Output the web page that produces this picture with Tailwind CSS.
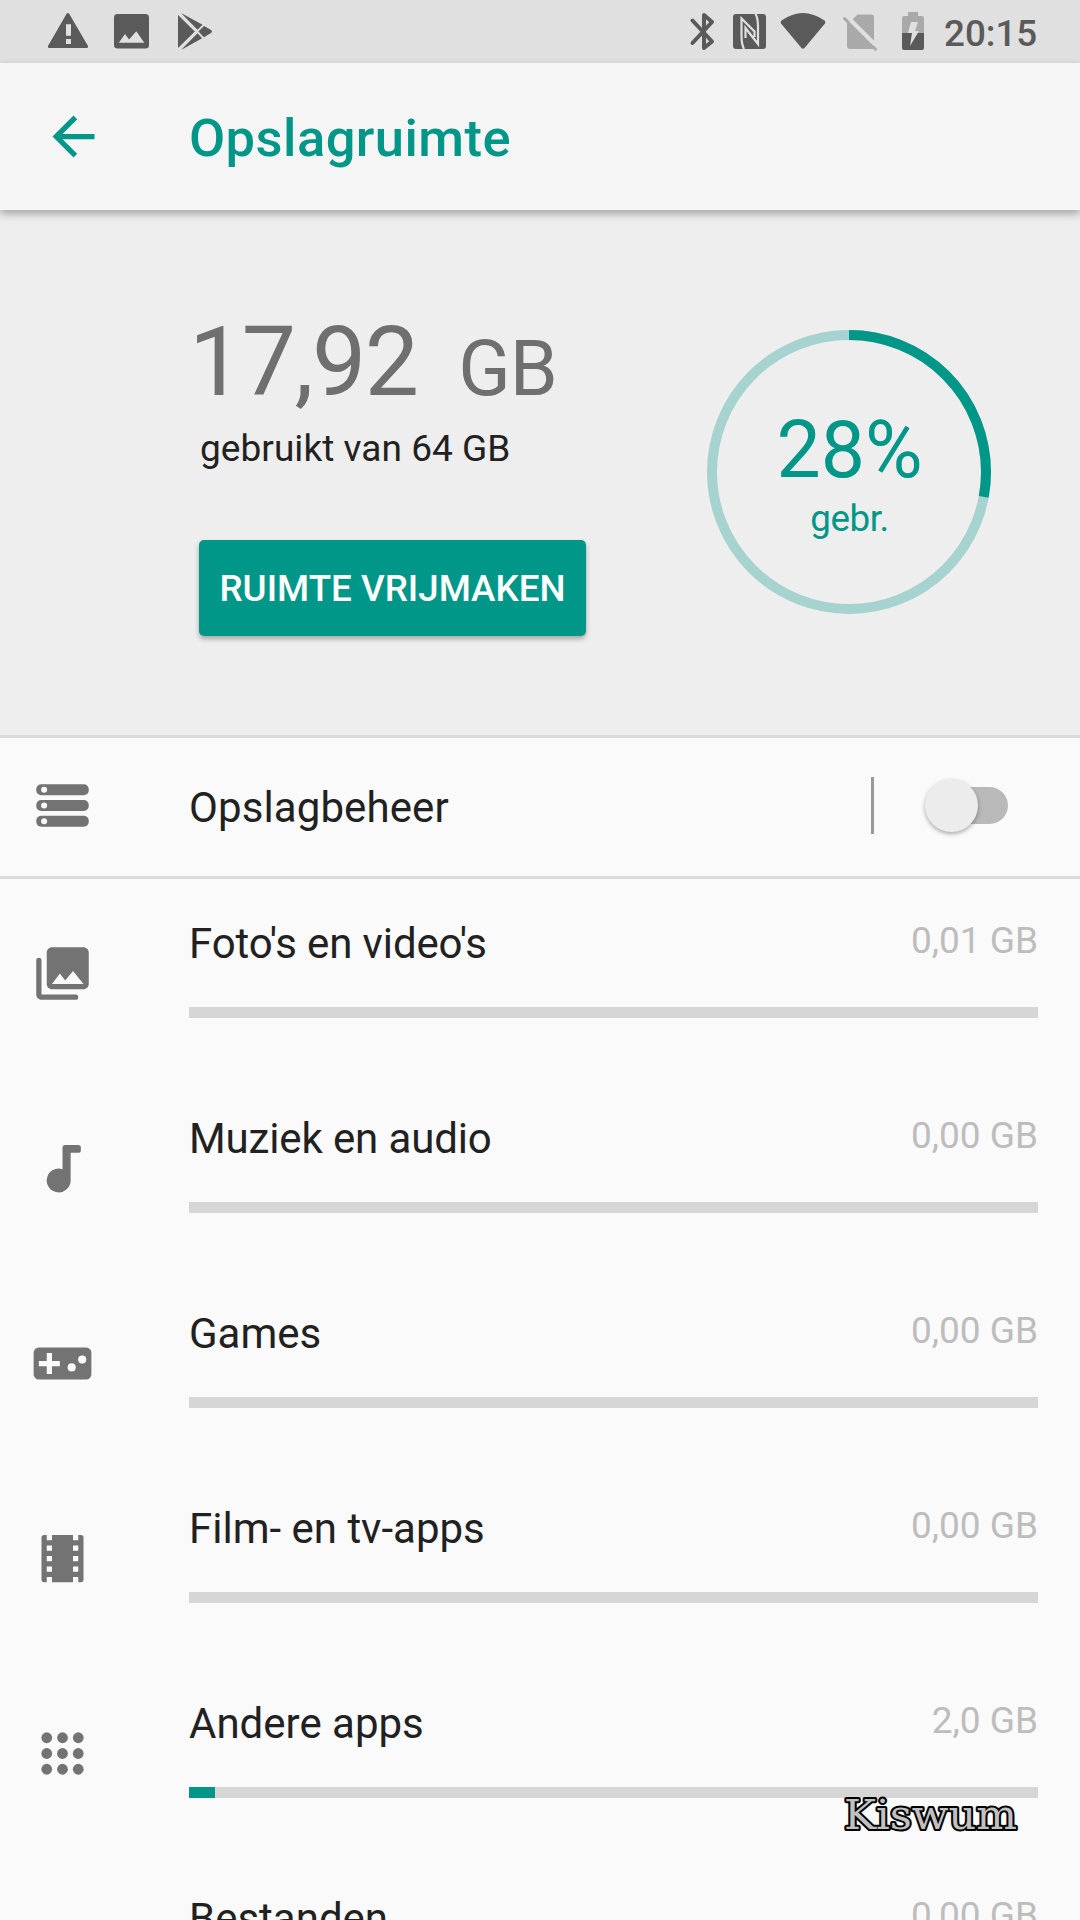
<!DOCTYPE html>
<html lang="nl">

<head>
    <meta charset="UTF-8">
    <meta name="viewport" content="width=device-width, initial-scale=1.0">
    <title>Opslagruimte</title>
    <!-- Tailwind CSS CDN -->
    <script src="https://cdn.jsdelivr.net/npm/@tailwindcss/browser@4"></script>
</head>

<body class="bg-[#fafafa] font-['Roboto',sans-serif] text-[#212121]">
    <div class="relative w-[1080px] h-[1920px] overflow-hidden flex flex-col">

        <!-- Status bar -->
        <div class="h-[63px] shrink-0 bg-[#e0e0e0] text-[#5a5a5a] flex justify-between">
            <svg class="w-[240px] h-[63px]" viewBox="0 0 240 63" fill="currentColor">
                <path fill-rule="evenodd" d="M66.6 13.8q1.4-1.6 2.6 0L88 46q.6 2-1.2 2H49.200q-1.800 0-1.200-2zM66 24.300v11.400h5V24.300zM66 39v5h5v-5z" />
                <path fill-rule="evenodd" d="M117.500 14h28q3.500 0 3.500 3.500v27.500q0 3.500-3.500 3.500h-28q-3.500 0-3.500-3.500V17.500q0-3.500 3.500-3.500zM118.800 42.800h25.500l-8-11.500-7.200 8.200-4.100-5.500z" />
                <path d="M178 15l16.800 16.500L178 48zM181 13l21.500 11.800-5 5zM204 26l7 4q2 1.500 0 3l-7 4.200-5.600-5.600zM197.500 33.300l4.600 5L181 50z" />
            </svg>
            <div class="flex">
                <svg class="w-[250px] h-[63px]" viewBox="680 0 250 63" fill="currentColor">
                    <path d="M692.500 20.500L712 41.500 704 48V15l8 7-19.500 21" fill="none" stroke="currentColor" stroke-width="4" stroke-linejoin="round" stroke-linecap="round" />
                    <rect x="733" y="14" width="33" height="35" rx="3" />
                    <path d="M744 49Q741.500 44 741.500 36V18.500L754.500 31.500V37M745.500 38V28L758 44V27Q758 18 755.500 14" fill="none" stroke="#e0e0e0" stroke-width="2.200" />
                    <path d="M781.500 20.500Q803 5.500 824.500 20.500 826 22 825 23.500L804.500 48q-1.500 1.500-3 0L781 23.500q-1-1.500.5-3z" />
                    <g stroke-linecap="round">
                        <path fill="#a9a9a9" d="M847 21l5-1 5.500-5.500H871q3 0 3 3V49H850q-3 0-3-3z" />
                        <path stroke="#e0e0e0" stroke-width="4" d="M846 15.500l30.500 30.500" />
                        <path stroke="#a9a9a9" stroke-width="3" d="M844.500 18.500l31 30.800" />
                        <path stroke="#e0e0e0" stroke-width="2.500" d="M850.500 21l23.500 23.500" />
                    </g>
                    <path fill="#a9a9a9" d="M902 33V18q0-2 2-2h4v-4h10v4h4q2 0 2 2v15z" />
                    <path d="M902 33h22v15q0 2-2 2h-18q-2 0-2-2z" />
                    <path fill="#e0e0e0" d="M911 22h7l-3 9h4l-9 15 2-13h-4z" />
                </svg>
                <div class="w-[150px] pl-[14px] leading-[68px] text-[36.75px] font-medium">20:15</div>
            </div>
        </div>

        <!-- Toolbar -->
        <div class="relative h-[147px] shrink-0 bg-[#f5f5f5] text-[#009688] flex items-center shadow-[0_4px_8px_rgba(0,0,0,0.31)]">
            <svg class="ml-[42px] size-[63px]" viewBox="0 0 24 24" fill="currentColor">
                <path d="M20 11H7.830l5.590-5.590L12 4l-8 8 8 8 1.410-1.410L7.830 13H20v-2z" />
            </svg>
            <h1 class="ml-[84px] text-[52.5px] tracking-[0.45px] font-medium leading-none pt-[4px]">Opslagruimte</h1>
        </div>

        <!-- Usage summary -->
        <div class="h-[528px] shrink-0 bg-[#eee] border-b-[3px] border-[#dbdbdb] flex">
            <div class="ml-[189px] w-[518px] pt-[96px] flex flex-col items-start">
                <div class="h-[113px] text-[#6f6f6f] text-[96.600px] leading-[113px] tracking-[-1.500px] whitespace-pre">17,92 <span class="text-[77px] leading-none tracking-[-1px]"> GB</span></div>
                <div class="ml-[11px] text-[37px] leading-[60px] tracking-[0.05px]">gebruikt van 64 GB</div>
                <button class="mt-[61px] ml-[10px] w-[387px] h-[96px] pt-[2px] rounded-[5px] bg-[#009688] text-white text-[36.75px] font-medium shadow-[0_3px_5px_rgba(0,0,0,0.3)]">RUIMTE VRIJMAKEN</button>
            </div>
            <div class="mt-[120px] size-[284px] grid">
                <svg class="col-start-1 row-start-1 size-[284px] -rotate-90" viewBox="0 0 284 284" fill="none" stroke-width="10">
                    <circle cx="142" cy="142" r="137" stroke="#a6d3cf" />
                    <circle cx="142" cy="142" r="137" stroke="#009688" pathLength="100" stroke-dasharray="27.900 100" />
                </svg>
                <div class="col-start-1 row-start-1 pt-[74px] pl-px text-center text-[#009688]">
                    <div class="text-[78.75px] leading-[92px]">28%</div>
                    <div class="text-[36.75px] leading-[46px] tracking-[-0.4px]">gebr.</div>
                </div>
            </div>
        </div>

        <!-- Storage manager -->
        <div class="h-[141px] shrink-0 border-b-[3px] border-[#dbdbdb] flex items-center pb-[3px]">
            <svg class="ml-[31px] size-[63px] shrink-0 text-[#737373]" viewBox="0 0 24 24" fill="currentColor">
                <rect x="2" y="3.900" width="20" height="4.200" rx="1.900" />
                <rect x="2" y="9.900" width="20" height="4.200" rx="1.900" />
                <rect x="2" y="15.900" width="20" height="4.200" rx="1.900" />
                <g fill="#fafafa">
                    <circle cx="5" cy="6" r="1.150" />
                    <circle cx="5" cy="12" r="1.150" />
                    <circle cx="5" cy="18" r="1.150" />
                </g>
            </svg>
            <div class="ml-[95px] w-[682px] pt-[5px] text-[42px] leading-none tracking-[0.1px]">Opslagbeheer</div>
            <div class="w-[3px] h-[57px] bg-[#999]"></div>
            <div class="ml-[51px] flex items-center">
                <div class="relative size-[53px] rounded-full bg-[#ececec] shadow-[0_2px_4px_rgba(0,0,0,0.32)]"></div>
                <div class="-ml-[26px] w-[56px] h-[37px] rounded-r-full bg-[#b9b9b9]"></div>
            </div>
        </div>

        <!-- Categories -->
        <div id="list" class="-mt-[3px]"></div>

        <!-- Watermark -->
        <svg class="absolute left-[836px] top-[1785px] w-[190px] h-[60px]" viewBox="0 0 190 60">
            <text x="8" y="43.500" textLength="173" lengthAdjust="spacingAndGlyphs" font-family="DejaVu Serif, serif" font-size="41" fill="#c0c0c0" stroke="#000" stroke-width="4" stroke-linejoin="round" paint-order="stroke">Kiswum</text>
        </svg>
    </div>

    <script>
        const rows = [
            {
                name: "Foto's en video's", size: '0,01 GB', used: 0, tracking: 'tracking-[-0.13px]',
                icon: '<path fill-rule="evenodd" d="M22 16V4c0-1.100-.9-2-2-2H8c-1.100 0-2 .9-2 2v12c0 1.100.9 2 2 2h12c1.100 0 2-.9 2-2zm-11-4l2.030 2.710L16 11l4 5H8l3-4z"/><path d="M3 6q-1 0-1 1v13c0 1.100.9 2 2 2h13q1 0 1-1t-1-1H4V7q0-1-1-1z"/>'
            },
            {
                name: 'Muziek en audio', size: '0,00 GB', used: 0, tracking: 'tracking-[-0.13px]',
                icon: '<path d="M13 3h5q1 0 1 1v1q0 1-1 1h-2.900v10.500a4.550 4.550 0 1 1-3.100-4.250V4q0-1 1-1z"/>'
            },
            {
                name: 'Games', size: '0,00 GB', used: 0, tracking: '',
                icon: '<rect x="1" y="5.900" width="22" height="12.200" rx="2"/><g fill="#fafafa"><path d="M6 8h2v3h3v2H8v3H6v-3H3v-2h3z"/><circle cx="15.500" cy="13.500" r="1.550"/><circle cx="19.500" cy="10.500" r="1.550"/></g>'
            },
            {
                name: 'Film- en tv-apps', size: '0,00 GB', used: 0, tracking: '',
                icon: '<path d="M18 3v2h-2V3H8v2H6V3H5q-1 0-1 1v16q0 1 1 1h1v-2h2v2h8v-2h2v2h1q1 0 1-1V4q0-1-1-1h-1zM8 17H6v-2h2v2zm0-4H6v-2h2v2zm0-4H6V7h2v2zm10 8h-2v-2h2v2zm0-4h-2v-2h2v2zm0-4h-2V7h2v2z"/>'
            },
            {
                name: 'Andere apps', size: '2,0 GB', used: 3.1, tracking: '',
                icon: [6, 12, 18].map(y => [6, 12, 18].map(x => `<circle cx="${x}" cy="${y}" r="2.050"/>`).join('')).join('')
            },
            { name: 'Bestanden', size: '0,00 GB', used: 0, tracking: '', icon: '' }
        ];

        document.getElementById('list').innerHTML = rows.map(row => `
            <div class="h-[195px] flex items-center">
                <svg class="ml-[31px] size-[63px] shrink-0 text-[#737373]" viewBox="0 0 24 24" fill="currentColor">${row.icon}</svg>
                <div class="ml-[95px] w-[849px] h-[195px] pt-[43px]">
                    <div class="h-[88px] flex justify-between">
                        <div class="text-[42px] leading-[50px] ${row.tracking}">${row.name}</div>
                        <div class="text-[37px] leading-[44px] text-[#bdbdbd]">${row.size}</div>
                    </div>
                    <div class="h-[11px] bg-[#d6d6d6]">
                        <div class="h-[11px] bg-[#009688]" style="width: ${row.used}%"></div>
                    </div>
                </div>
            </div>`).join('');
    </script>
</body>

</html>
